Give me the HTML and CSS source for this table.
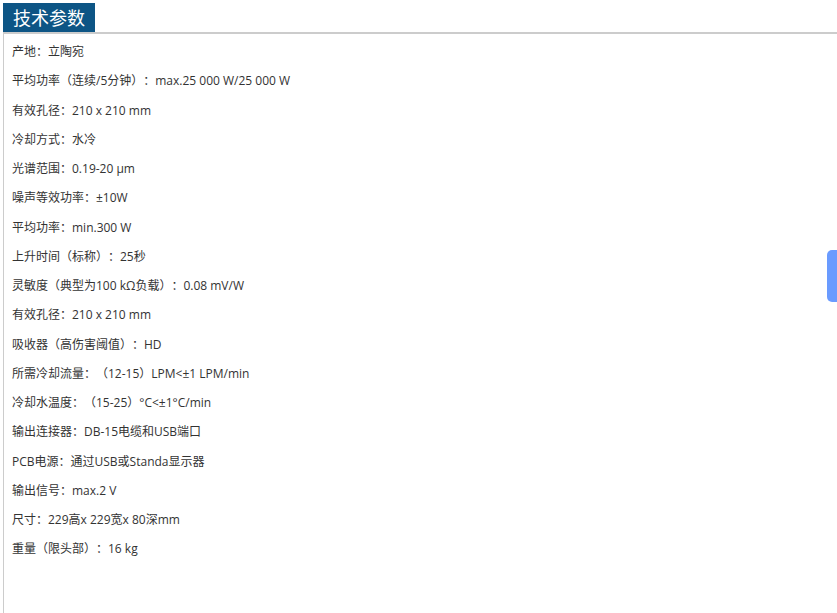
FILE: index.html
```html
<!DOCTYPE html>
<html lang="zh-CN">

<head>
    <meta charset="UTF-8">
    <title>技术参数</title>
    <link rel="stylesheet" href="styles.css">
</head>

<body>
    <div class="panel">
        <div class="panel-head">
            <h3 class="panel-title">技术参数</h3>
        </div>
        <div class="panel-body">
            <p>产地：立陶宛</p>
            <p>平均功率（连续/5分钟）：max.25 000 W/25 000 W</p>
            <p>有效孔径：210 x 210 mm</p>
            <p>冷却方式：水冷</p>
            <p>光谱范围：0.19-20 µm</p>
            <p>噪声等效功率：±10W</p>
            <p>平均功率：min.300 W</p>
            <p>上升时间（标称）：25秒</p>
            <p>灵敏度（典型为100 kΩ负载）：0.08 mV/W</p>
            <p>有效孔径：210 x 210 mm</p>
            <p>吸收器（高伤害阈值）：HD</p>
            <p>所需冷却流量：（12-15）LPM&lt;±1 LPM/min</p>
            <p>冷却水温度：（15-25）°C&lt;±1°C/min</p>
            <p>输出连接器：DB-15电缆和USB端口</p>
            <p>PCB电源：通过USB或Standa显示器</p>
            <p>输出信号：max.2 V</p>
            <p>尺寸：229高x 229宽x 80深mm</p>
            <p>重量（限头部）：16 kg</p>
        </div>
    </div>

    <a href="javascript:;" class="side-tab"></a>
</body>

</html>
```

FILE: styles.css
```css
* {
    margin: 0;
    padding: 0;
}

body {
    font-family: "Open Sans", "Noto Sans CJK SC", sans-serif;
    font-size: 12px;
    color: #333;
    background-color: #fff;
    padding: 3px 0 0 3px;
    height: 613px;
    box-sizing: border-box;
    overflow: hidden;
    text-spacing-trim: space-all;
}

.panel {
    height: 100%;
    border-left: 1px solid #ccc;
}

.panel-head {
    border-bottom: 2px solid #ccc;
}

.panel-title {
    display: inline-block;
    width: 82px;
    height: 29px;
    padding-left: 10px;
    margin-left: -1px;
    background-color: #0d5585;
    color: #fff;
    font-family: "Noto Sans CJK SC", sans-serif;
    font-size: 18px;
    font-weight: normal;
    line-height: 29px;
    vertical-align: top;
}

.panel-body {
    padding: 3px 0 0 8px;
}

.panel-body p {
    line-height: 29.25px;
    white-space: nowrap;
}

.side-tab {
    position: fixed;
    right: 0;
    top: 250px;
    width: 10px;
    height: 52px;
    background-color: #6a9bff;
    border-radius: 5px 0 0 5px;
}
```
